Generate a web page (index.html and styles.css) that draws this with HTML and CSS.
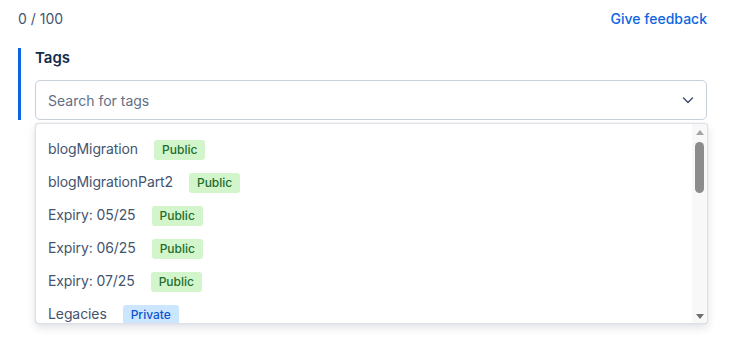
FILE: index.html
```html
<!DOCTYPE html>
<html lang="en">
<head>
    <meta charset="UTF-8">
    <meta name="viewport" content="width=device-width, initial-scale=1.0">
    <link rel="stylesheet" href="styles.css">
    <title>Tags</title>
</head>
<body>

    <div class="page">
        <div class="top-row">
            <span class="counter">0 / 100</span>
            <a class="feedback" href="#">Give feedback</a>
        </div>

        <div class="field">
            <label class="field-label" for="tags">Tags</label>
            <div class="select">
                <div class="select-control">
                    <input id="tags" class="select-input" type="text" placeholder="Search for tags">
                    <svg class="chevron" width="16" height="16" viewBox="0 0 16 16">
                        <path d="M3.5 6 L8 10.5 L12.5 6" fill="none" stroke="#44546F" stroke-width="1.5" stroke-linecap="round" stroke-linejoin="round"/>
                    </svg>
                </div>

                <div class="menu">
                    <ul class="options">
                        <li class="option">blogMigration <span class="lozenge public">Public</span></li>
                        <li class="option">blogMigrationPart2 <span class="lozenge public">Public</span></li>
                        <li class="option">Expiry: 05/25 <span class="lozenge public">Public</span></li>
                        <li class="option">Expiry: 06/25 <span class="lozenge public">Public</span></li>
                        <li class="option">Expiry: 07/25 <span class="lozenge public">Public</span></li>
                        <li class="option">Legacies <span class="lozenge private">Private</span></li>
                    </ul>
                    <div class="scrollbar">
                        <span class="arrow up"></span>
                        <div class="track">
                            <span class="thumb"></span>
                        </div>
                        <span class="arrow down"></span>
                    </div>
                </div>
            </div>
        </div>
    </div>

</body>
</html>
```

FILE: styles.css
```css
html, body {
    height: 100%;
}

body {
    margin: 0;
    font-family: Inter, "Noto Sans", sans-serif;
    font-size: 14px;
    color: #44546F;
    background: #fff;
}

.page {
    min-height: 354px;
    box-sizing: border-box;
    padding: 9px 23px 0 18px;
}

.top-row {
    display: flex;
    justify-content: space-between;
    align-items: center;
    height: 20px;
    line-height: 20px;
}

.counter {
    color: #44546F;
}

.feedback {
    color: #0C66E4;
    font-weight: 500;
    text-decoration: none;
}

.field {
    margin-top: 19px;
    border-left: 3px solid #0C66E4;
    padding-left: 14px;
}

.field-label {
    display: block;
    height: 20px;
    line-height: 20px;
    font-size: 15px;
    font-weight: 600;
    color: #172B4D;
    margin-bottom: 12px;
}

.select {
    position: relative;
    z-index: 1;
}

.select-control {
    display: flex;
    align-items: center;
    height: 38px;
    border: 1px solid #C8D0D8;
    border-radius: 5px;
    padding: 0 10px 0 12px;
}

.select-input {
    flex: 1;
    border: none;
    outline: none;
    padding: 0;
    font-family: inherit;
    font-size: 14px;
    color: #172B4D;
    background: transparent;
}

.select-input::placeholder {
    color: #626F86;
}

.chevron {
    display: block;
}

/* dropdown opens over whatever is below the field */
.menu {
    position: absolute;
    top: 43px;
    left: 0;
    right: -1px;
    height: 199px;
    display: flex;
    overflow: hidden;
    background: #fff;
    border: 1px solid #DFE1E6;
    border-radius: 4px;
    box-shadow: 0 4px 8px rgba(9, 30, 66, 0.12), 0 0 1px rgba(9, 30, 66, 0.2);
}

.options {
    flex: 1;
    margin: 0;
    padding: 8px 0 0 0;
    list-style: none;
}

.option {
    display: flex;
    align-items: center;
    gap: 16px;
    height: 33px;
    padding: 0 12px;
    color: #44546F;
    letter-spacing: -0.1px;
}

.lozenge {
    display: inline-block;
    height: 20px;
    line-height: 20px;
    padding: 0 8px;
    border-radius: 3px;
    font-size: 12px;
    font-weight: 500;
    letter-spacing: 0;
    margin-top: 2px;
}

.lozenge.public {
    background-color: #D3F5CB;
    color: #216E2E;
}

.lozenge.private {
    background-color: #CCE6FF;
    color: #0C55CC;
}

/* fake scrollbar */
.scrollbar {
    width: 15px;
    display: flex;
    flex-direction: column;
    align-items: center;
    background: #F8F8F8;
    padding: 6px 0 4px;
    box-sizing: border-box;
}

.arrow {
    width: 0;
    height: 0;
    border-left: 4px solid transparent;
    border-right: 4px solid transparent;
}

.arrow.up {
    border-bottom: 5px solid #A3A3A3;
}

.arrow.down {
    border-top: 5px solid #6E6E6E;
}

.track {
    flex: 1;
    width: 100%;
    display: flex;
    justify-content: center;
    padding-top: 7px;
}

.thumb {
    width: 9px;
    height: 51px;
    border-radius: 5px;
    background: #8C8C8C;
}
```
